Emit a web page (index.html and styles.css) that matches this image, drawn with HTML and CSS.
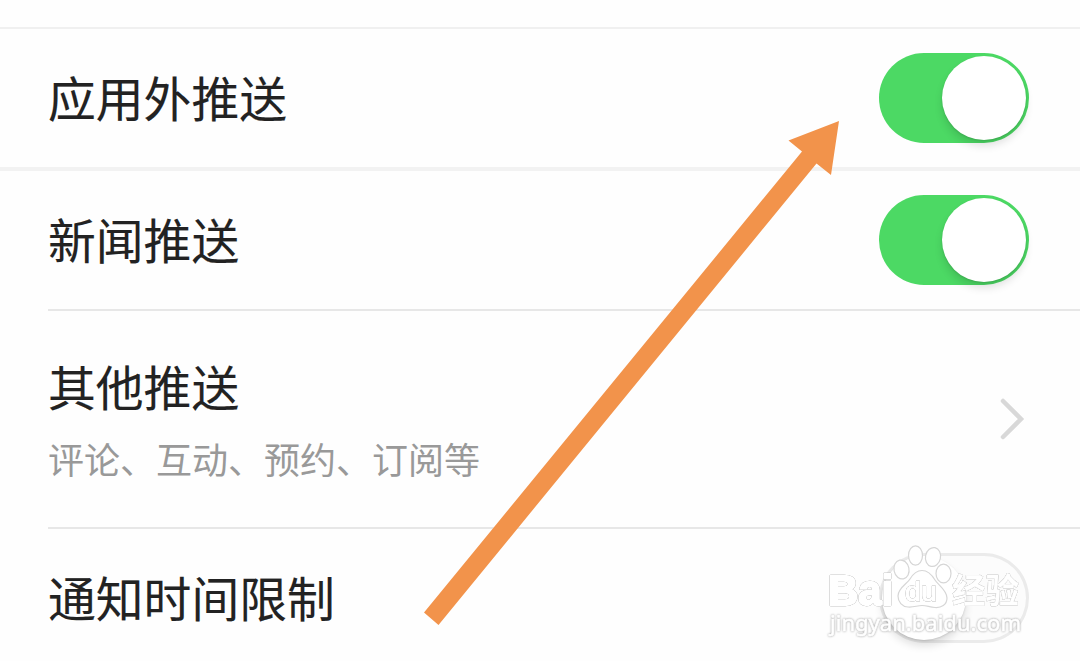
FILE: index.html
```html
<!DOCTYPE html>
<html lang="zh-CN">
<head>
<meta charset="utf-8">
<title>推送设置</title>
<link rel="stylesheet" href="styles.css">
</head>
<body>
<main class="screen">
  <section class="group">
    <div class="row">
      <span class="title">应用外推送</span>
      <span class="switch on"><span class="knob"></span></span>
    </div>
  </section>
  <section class="group list">
    <div class="row">
      <span class="title">新闻推送</span>
      <span class="switch on"><span class="knob"></span></span>
    </div>
    <div class="row tall">
      <div class="labels">
        <span class="title">其他推送</span>
        <span class="subtitle">评论、互动、预约、订阅等</span>
      </div>
      <svg class="chevron" width="26" height="44" viewBox="0 0 26 44"><path d="M3 4L21 22L3 40"/></svg>
    </div>
    <div class="row">
      <span class="title">通知时间限制</span>
      <span class="switch"><span class="knob"></span></span>
    </div>
  </section>
  <svg class="arrow" width="1080" height="661" viewBox="0 0 1080 661"><path d="M839 121L831 175L816.500 163.500L438.500 625L424 612.500L802 151.500L788.500 140.500Z"/></svg>
  <svg class="watermark" width="220" height="110" viewBox="820 540 220 110">
    <g class="mark">
      <text class="brand" x="828" y="604.500" textLength="65" lengthAdjust="spacingAndGlyphs">Bai</text>
      <ellipse cx="901.500" cy="569.500" rx="7.500" ry="9.500" transform="rotate(-12 901.500 569.500)"/>
      <ellipse cx="915.500" cy="555.500" rx="7" ry="9.700"/>
      <ellipse cx="933" cy="557" rx="7.500" ry="9.500" transform="rotate(12 933 557)"/>
      <ellipse cx="943.500" cy="573.500" rx="7.500" ry="9.300"/>
      <path d="M922 570.500C928 570.500 932 575 935 580C938 585 947 590 947 598C947 605 941 608 935 607.500C929 607 927 605.500 922 605.500C917 605.500 914 607.500 908 607C902 606.500 898 602 898 596C898 588 907 584 910 579C913 574 916 570.500 922 570.500Z"/>
      <text class="du" x="905" y="601" textLength="32" lengthAdjust="spacingAndGlyphs">du</text>
      <text class="name" x="952" y="603" textLength="67" lengthAdjust="spacingAndGlyphs">经验</text>
      <text class="site" x="830" y="631" textLength="191" lengthAdjust="spacingAndGlyphs">jingyan.baidu.com</text>
    </g>
  </svg>
</main>
</body>
</html>
```
FILE: styles.css
```css
* { box-sizing: border-box; }
body { margin: 0; background: #fefefe; font-family: "Noto Sans CJK SC", sans-serif; }
.screen { position: relative; height: 661px; padding-top: 27px; overflow: hidden; }
.group { border-top: 2px solid #f0f0f0; }
.list { border-top: 4px solid #f2f2f2; padding-left: 48px; }
.row { display: flex; align-items: center; justify-content: space-between; height: 138px; padding: 0 51px 0 48px; }
.list .row { padding-left: 0; }
.list .row + .row { height: 140px; border-top: 2px solid #e7e7e7; }
.list .row.tall { height: 218px; padding-right: 54px; }
.title { padding-bottom: 2px; font-size: 47.8px; line-height: 72px; color: #222; -webkit-text-stroke: .15px #222; }
.labels { display: flex; flex-direction: column; padding-bottom: 3px; }
.labels .title { padding-bottom: 0; }
.subtitle { font-size: 36px; line-height: 54px; margin-top: 9px; color: #999; }
.switch { width: 150px; height: 90px; padding: 3px; border-radius: 45px; background: #fcfcfc; box-shadow: inset 0 0 0 3px #ebebeb; }
.switch.on { display: flex; justify-content: flex-end; background: #4cd964; box-shadow: none; }
.knob { display: block; width: 84px; height: 84px; border-radius: 50%; background: #fff; box-shadow: 0 6px 8px rgba(0, 0, 0, .12), 0 1px 2px rgba(0, 0, 0, .12); }
.chevron path { fill: none; stroke: #d8d8d8; stroke-width: 4.5; stroke-linecap: round; }
.arrow { position: absolute; left: 0; top: 0; fill: #f2934b; }
.watermark { position: absolute; left: 820px; top: 540px; }
.mark { fill: #fff; stroke: #d6d6d6; stroke-width: 1.2; font-family: "Liberation Sans", sans-serif; }
.mark text { stroke: #fff; stroke-linejoin: round; filter: drop-shadow(0 0 .7px #777); }
.brand { font-size: 43px; font-weight: bold; stroke-width: 2.4; }
.du { font-size: 27px; stroke-width: 1.2; }
.name { font: bold 34px "Noto Sans CJK SC", sans-serif; stroke-width: .6; }
.mark .site { font: 22.5px "Noto Sans", sans-serif; stroke-width: .6; filter: drop-shadow(0 0 .8px #999); }
```
